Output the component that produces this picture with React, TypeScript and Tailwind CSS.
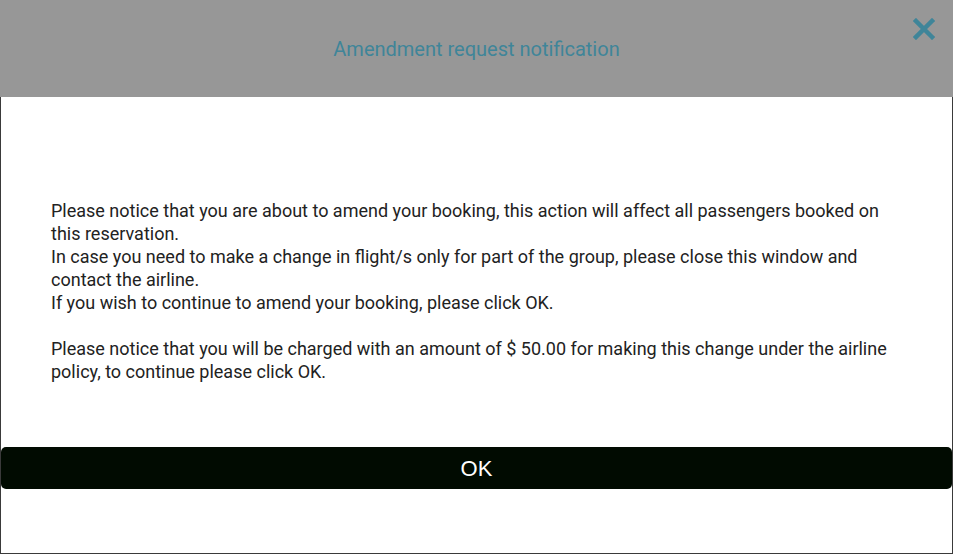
export default function App() {
  return (
    <div className="flex h-[554px] w-[953px] flex-col bg-white font-['Roboto',sans-serif]">
      <header className="relative flex h-[97px] shrink-0 items-center justify-center bg-[#979797]">
        <h1 className="text-[20px] leading-none text-[#3f8599]">Amendment request notification</h1>
        <button className="absolute right-[18px] top-[18px] text-[#3f8599]" aria-label="Close">
          <svg width="22" height="22" viewBox="0 0 22 22">
            <path d="M3 3L19 19M19 3L3 19" stroke="currentColor" strokeWidth="4.5" strokeLinecap="square" />
          </svg>
        </button>
      </header>
      <div className="flex flex-1 flex-col border-x border-b border-[#3a3a3a]">
        <div className="px-[50px] pt-[102px] text-[18px] leading-[23px] text-[#222]">
          <p>
            Please notice that you are about to amend your booking, this action will affect all passengers booked on
            this reservation.
            <br />
            In case you need to make a change in flight/s only for part of the group, please close this window and
            contact the airline.
            <br />
            If you wish to continue to amend your booking, please click OK.
          </p>
          <p className="mt-[23px]">
            Please notice that you will be charged with an amount of $ 50.00 for making this change under the airline
            policy, to continue please click OK.
          </p>
        </div>
        <button className="mt-[64px] h-[42px] w-full rounded-[5px] bg-[#010b01] font-['Liberation_Sans',Arial,sans-serif] text-[22px] text-white">
          OK
        </button>
      </div>
    </div>
  );
}
